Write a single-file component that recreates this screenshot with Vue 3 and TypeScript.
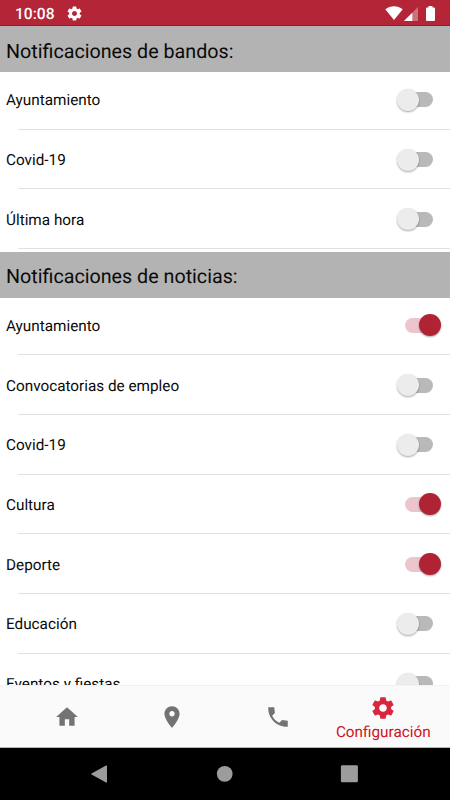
<script setup lang="ts">
import { reactive } from 'vue'

interface Topic {
  name: string
  on: boolean
}
interface Section {
  title: string
  topics: Topic[]
}

const sections = reactive<Section[]>([
  {
    title: 'Notificaciones de bandos:',
    topics: [
      { name: 'Ayuntamiento', on: false },
      { name: 'Covid-19', on: false },
      { name: 'Última hora', on: false },
    ],
  },
  {
    title: 'Notificaciones de noticias:',
    topics: [
      { name: 'Ayuntamiento', on: true },
      { name: 'Convocatorias de empleo', on: false },
      { name: 'Covid-19', on: false },
      { name: 'Cultura', on: true },
      { name: 'Deporte', on: true },
      { name: 'Educación', on: false },
      { name: 'Eventos y fiestas', on: false },
    ],
  },
])

const gear =
  'M19.43 12.98c.04-.32.07-.64.07-.98s-.03-.66-.07-.98l2.11-1.65c.19-.15.24-.42.12-.64l-2-3.46c-.12-.22-.39-.3-.61-.22l-2.49 1c-.52-.4-1.08-.73-1.69-.98l-.38-2.65C14.46 2.18 14.25 2 14 2h-4c-.25 0-.46.18-.49.42l-.38 2.65c-.61.25-1.17.59-1.69.98l-2.49-1c-.23-.09-.49 0-.61.22l-2 3.46c-.13.22-.07.49.12.64l2.11 1.65c-.04.32-.07.65-.07.98s.03.66.07.98l-2.11 1.65c-.19.15-.24.42-.12.64l2 3.46c.12.22.39.3.61.22l2.49-1c.52.4 1.08.73 1.69.98l.38 2.65c.03.24.24.42.49.42h4c.25 0 .46-.18.49-.42l.38-2.65c.61-.25 1.17-.59 1.69-.98l2.49 1c.23.09.49 0 .61-.22l2-3.46c.12-.22.07-.49-.12-.64l-2.11-1.65zM12 15.5c-1.93 0-3.5-1.57-3.5-3.5s1.57-3.5 3.5-3.5 3.5 1.57 3.5 3.5-1.57 3.5-3.5 3.5z'

const tabs = [
  { label: '', path: 'M10 20v-6h4v6h5v-8h3L12 3 2 12h3v8z' },
  {
    label: '',
    path: 'M12 2C8.13 2 5 5.13 5 9c0 5.25 7 13 7 13s7-7.75 7-13c0-3.87-3.13-7-7-7zm0 9.5c-1.38 0-2.5-1.12-2.5-2.5s1.12-2.5 2.5-2.5 2.5 1.12 2.5 2.5-1.12 2.5-2.5 2.5z',
  },
  {
    label: '',
    path: 'M21 15.46l-5.27-.61-2.52 2.52c-2.83-1.44-5.15-3.75-6.59-6.59l2.53-2.53L8.540 3H3.030C2.450 13.180 10.820 21.550 21 20.970z',
  },
  { label: 'Configuración', path: gear },
]
</script>

<template>
  <div class="screen">
    <header class="status">
      <span class="clock">10:08</span>
      <svg class="status-gear" viewBox="0 0 24 24"><path :d="gear" /></svg>
      <svg class="wifi" viewBox="0 0 18 14"><path d="M0.3 3.2C5.5-.7 12.5-.7 17.7 3.2L9 14z" /></svg>
      <svg class="signal" viewBox="0 0 14 14">
        <path d="M14 0v14H0z" opacity=".35" />
        <path d="M8.3 5.7V14H0z" />
      </svg>
      <svg class="battery" viewBox="0 0 9 15">
        <path d="M2.500 0h4v1.600H8q1 0 1 1V14q0 1-1 1H1q-1 0-1-1V2.600q0-1 1-1h1.500z" />
      </svg>
    </header>

    <main class="content">
      <section v-for="section in sections" :key="section.title">
        <h2 class="title">{{ section.title }}</h2>
        <ul class="list">
          <li v-for="topic in section.topics" :key="topic.name" class="row">
            <span class="name">{{ topic.name }}</span>
            <button
              class="switch"
              :class="{ on: topic.on }"
              role="switch"
              :aria-checked="topic.on"
              @click="topic.on = !topic.on"
            >
              <span class="thumb"></span>
            </button>
          </li>
        </ul>
      </section>
    </main>

    <nav class="tabs">
      <div v-for="(tab, i) in tabs" :key="i" class="tab" :class="{ active: tab.label }">
        <svg class="tab-icon" viewBox="0 0 24 24"><path :d="tab.path" /></svg>
        <span v-if="tab.label" class="tab-label">{{ tab.label }}</span>
      </div>
    </nav>

    <footer class="system">
      <svg viewBox="0 0 18 18"><path d="M16 .5q1-.4 1 .6v15.800q0 1-1 .6L1.500 9.500q-.8-.5 0-1z" /></svg>
      <svg viewBox="0 0 18 18"><circle cx="9.700" cy="8.800" r="7.900" /></svg>
      <svg viewBox="0 0 18 18"><rect x=".9" y=".2" width="17" height="17" rx="1.300" /></svg>
    </footer>
  </div>
</template>

<style>
body {
  margin: 0;
}
</style>

<style scoped>
.screen {
  width: 450px;
  height: 800px;
  display: flex;
  flex-direction: column;
  overflow: hidden;
  background: #fff;
  color: #0a0a0a;
  font-family: Roboto, sans-serif;
  text-rendering: geometricPrecision;
}
.status {
  flex: none;
  box-sizing: border-box;
  height: 26px;
  padding: 0 15.500px 0 15px;
  display: flex;
  align-items: center;
  background: #b32537;
  border-bottom: 1px solid #b00f20;
  color: #fff;
}
.status svg {
  fill: #fff;
}
.clock {
  font-size: 15.600px;
  font-weight: 500;
  line-height: 20px;
  padding-top: 3px;
}
.status-gear {
  width: 17px;
  height: 17px;
  margin: 1px auto 0 11px;
}
.wifi {
  width: 18px;
  height: 14px;
  margin: 1px 1px 0 0;
}
.signal {
  width: 14px;
  height: 14px;
  margin: 2px 8px 0 0;
}
.battery {
  width: 9px;
  height: 15px;
  margin-top: 2px;
}
.content {
  flex: 1;
  min-height: 0;
  overflow: hidden;
}
.title {
  margin: 0;
  height: 46px;
  padding: 4px 6px 0;
  box-sizing: border-box;
  display: flex;
  align-items: center;
  background: #b3b3b3;
  font-size: 19.700px;
  font-weight: 400;
}
.list {
  list-style: none;
  margin: -2px 0 2.500px;
  padding: 0;
}
.row {
  height: 59.700px;
  box-sizing: border-box;
  padding: 0 9.500px 0 6px;
  display: flex;
  align-items: center;
  justify-content: space-between;
  background: linear-gradient(#e1e1e1, #e1e1e1) 18px 100% / 100% 1px no-repeat;
}
.name {
  font-size: 15.300px;
  padding-top: 1px;
}
.switch {
  width: 44px;
  height: 22px;
  padding: 0;
  border: 0;
  display: flex;
  align-items: center;
  background: none;
  isolation: isolate;
}
.switch::before {
  content: '';
  width: 28px;
  height: 15px;
  margin: 0 -36px 0 8px;
  border-radius: 8px;
  background: #b9b9b9;
}
.thumb {
  z-index: 1;
  width: 22px;
  height: 22px;
  border-radius: 50%;
  background: #ececec;
  box-shadow: 0 1px 2px rgba(0, 0, 0, 0.35);
}
.switch.on::before {
  background: #ecc6cc;
  margin-right: -14px;
}
.switch.on .thumb {
  background: #b02335;
}
.tabs {
  flex: none;
  box-sizing: border-box;
  height: 63px;
  padding: 0 14px;
  display: grid;
  grid-template-columns: repeat(4, 1fr);
  background: #fafafa;
  border-top: 1px solid #f2f2f2;
  border-bottom: 1px solid #b5b5b5;
}
.tab {
  display: flex;
  flex-direction: column;
  align-items: center;
  justify-content: center;
  fill: #737373;
}
.tab-icon {
  width: 26px;
  height: 26px;
}
.tab.active {
  fill: #d7263d;
  color: #cc1424;
  justify-content: flex-start;
  padding-top: 9px;
}
.tab-label {
  font-size: 15.300px;
  line-height: 18px;
  padding-top: 2px;
  white-space: nowrap;
}
.system {
  flex: none;
  height: 52px;
  padding: 0 92px 0 90px;
  display: flex;
  align-items: center;
  justify-content: space-between;
  background: #000;
}
.system svg {
  width: 18px;
  height: 18px;
  fill: #9c9c9c;
}
</style>
